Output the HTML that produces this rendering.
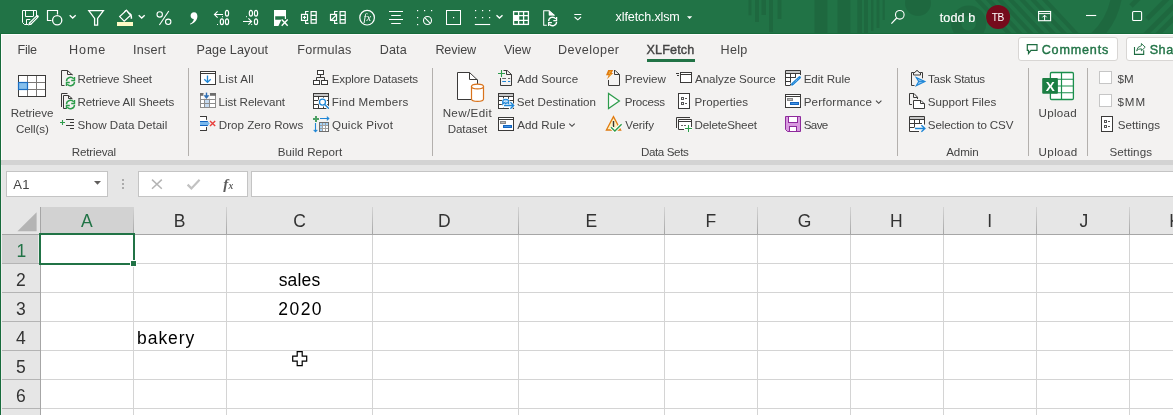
<!DOCTYPE html>
<html lang="en"><head><meta charset="utf-8"><title>xlfetch.xlsm - Excel</title>
<style>
html,body{margin:0;padding:0;}
body{width:1173px;height:415px;overflow:hidden;position:relative;background:#e6e6e6;font-family:"Liberation Sans", sans-serif;}
.b{position:absolute;}
.t{position:absolute;white-space:pre;line-height:1;}
#txt{position:absolute;left:0;top:0;width:1173px;height:415px;will-change:transform;}
svg{overflow:visible}
</style></head><body>
<div class="b" style="left:0px;top:0px;width:1173px;height:33px;background:#217346;"></div>
<!--TITLEDECO-->
<div class="b" style="left:0px;top:33px;width:1173px;height:1px;background:#176b3b;"></div>
<div class="b" style="left:0px;top:34px;width:1173px;height:1px;background:#ffffff;"></div>
<div class="b" style="left:0px;top:35px;width:1173px;height:125px;background:#f3f2f1;"></div>
<div class="b" style="left:0px;top:160px;width:1173px;height:5px;background:#d3d3d3;"></div>
<div class="b" style="left:0px;top:165px;width:1173px;height:250px;background:#e6e6e6;"></div>
<div class="b" style="left:0px;top:33px;width:1px;height:382px;background:#176b3b;"></div>
<div class="b" style="left:1px;top:34px;width:1px;height:126px;background:#fcfcfc;"></div>
<div class="b" style="left:1px;top:165px;width:1px;height:250px;background:#eeeeee;"></div>
<div class="b" style="left:647px;top:59px;width:48px;height:3px;background:#217346;"></div>
<div class="b" style="left:1018px;top:37.3px;width:99.5px;height:23.7px;background:#ffffff;border:1px solid #d8d6d4;border-radius:3px;box-sizing:border-box"></div>
<div class="b" style="left:1126px;top:37.3px;width:60px;height:23.7px;background:#ffffff;border:1px solid #d8d6d4;border-radius:3px;box-sizing:border-box"></div>
<div class="b" style="left:188.0px;top:68px;width:1px;height:88px;background:#b3b0ad;"></div>
<div class="b" style="left:432.0px;top:68px;width:1px;height:88px;background:#b3b0ad;"></div>
<div class="b" style="left:897.0px;top:68px;width:1px;height:88px;background:#b3b0ad;"></div>
<div class="b" style="left:1028.0px;top:68px;width:1px;height:88px;background:#b3b0ad;"></div>
<div class="b" style="left:1087.0px;top:68px;width:1px;height:88px;background:#b3b0ad;"></div>
<div class="b" style="left:1099px;top:71px;width:13px;height:13px;background:#ffffff;border:1px solid #c6c6c6;box-sizing:border-box"></div>
<div class="b" style="left:1099px;top:94px;width:13px;height:13px;background:#ffffff;border:1px solid #c6c6c6;box-sizing:border-box"></div>
<div class="b" style="left:6px;top:171px;width:102px;height:26px;background:#ffffff;border:1px solid #c4c4c4;box-sizing:border-box"></div>
<div class="b" style="left:138px;top:171px;width:109.5px;height:26px;background:#ffffff;border:1px solid #c4c4c4;box-sizing:border-box"></div>
<div class="b" style="left:251px;top:171px;width:930px;height:26px;background:#ffffff;border:1px solid #c4c4c4;box-sizing:border-box"></div>
<div class="b" style="left:122px;top:179px;width:2px;height:2px;background:#ababab;"></div>
<div class="b" style="left:122px;top:183px;width:2px;height:2px;background:#ababab;"></div>
<div class="b" style="left:122px;top:187px;width:2px;height:2px;background:#ababab;"></div>
<div class="b" style="left:41px;top:235px;width:1132px;height:180px;background:#ffffff;"></div>
<div class="b" style="left:41px;top:207px;width:92px;height:27px;background:#d2d2d2;"></div>
<div class="b" style="left:2px;top:235px;width:36px;height:28px;background:#d2d2d2;"></div>
<div class="b" style="left:38px;top:235px;width:1px;height:28px;background:#ececec;"></div>
<div class="b" style="left:2px;top:234px;width:1173px;height:1px;background:#a6a6a6;"></div>
<div class="b" style="left:40px;top:207px;width:1px;height:208px;background:#a6a6a6;"></div>
<div class="b" style="left:133px;top:207px;width:1px;height:27px;background:linear-gradient(#d4d4d4,#a6a6a6);"></div>
<div class="b" style="left:133px;top:235px;width:1px;height:180px;background:#d4d4d4;"></div>
<div class="b" style="left:226px;top:207px;width:1px;height:27px;background:linear-gradient(#d4d4d4,#a6a6a6);"></div>
<div class="b" style="left:226px;top:235px;width:1px;height:180px;background:#d4d4d4;"></div>
<div class="b" style="left:372px;top:207px;width:1px;height:27px;background:linear-gradient(#d4d4d4,#a6a6a6);"></div>
<div class="b" style="left:372px;top:235px;width:1px;height:180px;background:#d4d4d4;"></div>
<div class="b" style="left:518px;top:207px;width:1px;height:27px;background:linear-gradient(#d4d4d4,#a6a6a6);"></div>
<div class="b" style="left:518px;top:235px;width:1px;height:180px;background:#d4d4d4;"></div>
<div class="b" style="left:664px;top:207px;width:1px;height:27px;background:linear-gradient(#d4d4d4,#a6a6a6);"></div>
<div class="b" style="left:664px;top:235px;width:1px;height:180px;background:#d4d4d4;"></div>
<div class="b" style="left:757px;top:207px;width:1px;height:27px;background:linear-gradient(#d4d4d4,#a6a6a6);"></div>
<div class="b" style="left:757px;top:235px;width:1px;height:180px;background:#d4d4d4;"></div>
<div class="b" style="left:850px;top:207px;width:1px;height:27px;background:linear-gradient(#d4d4d4,#a6a6a6);"></div>
<div class="b" style="left:850px;top:235px;width:1px;height:180px;background:#d4d4d4;"></div>
<div class="b" style="left:943px;top:207px;width:1px;height:27px;background:linear-gradient(#d4d4d4,#a6a6a6);"></div>
<div class="b" style="left:943px;top:235px;width:1px;height:180px;background:#d4d4d4;"></div>
<div class="b" style="left:1036px;top:207px;width:1px;height:27px;background:linear-gradient(#d4d4d4,#a6a6a6);"></div>
<div class="b" style="left:1036px;top:235px;width:1px;height:180px;background:#d4d4d4;"></div>
<div class="b" style="left:1129px;top:207px;width:1px;height:27px;background:linear-gradient(#d4d4d4,#a6a6a6);"></div>
<div class="b" style="left:1129px;top:235px;width:1px;height:180px;background:#d4d4d4;"></div>
<div class="b" style="left:41px;top:263px;width:1132px;height:1px;background:#d4d4d4;"></div>
<div class="b" style="left:2px;top:263px;width:38px;height:1px;background:#b4b4b4;"></div>
<div class="b" style="left:41px;top:292px;width:1132px;height:1px;background:#d4d4d4;"></div>
<div class="b" style="left:2px;top:292px;width:38px;height:1px;background:#b4b4b4;"></div>
<div class="b" style="left:41px;top:321px;width:1132px;height:1px;background:#d4d4d4;"></div>
<div class="b" style="left:2px;top:321px;width:38px;height:1px;background:#b4b4b4;"></div>
<div class="b" style="left:41px;top:350px;width:1132px;height:1px;background:#d4d4d4;"></div>
<div class="b" style="left:2px;top:350px;width:38px;height:1px;background:#b4b4b4;"></div>
<div class="b" style="left:41px;top:379px;width:1132px;height:1px;background:#d4d4d4;"></div>
<div class="b" style="left:2px;top:379px;width:38px;height:1px;background:#b4b4b4;"></div>
<div class="b" style="left:41px;top:408px;width:1132px;height:1px;background:#d4d4d4;"></div>
<div class="b" style="left:2px;top:408px;width:38px;height:1px;background:#b4b4b4;"></div>
<div class="b" style="left:41px;top:233px;width:94px;height:2px;background:#217346;"></div>
<div class="b" style="left:39px;top:235px;width:2px;height:29px;background:#217346;"></div>
<div class="b" style="left:39px;top:233px;width:96px;height:32px;background:transparent;border:2px solid #217346;box-sizing:border-box"></div>
<div class="b" style="left:130px;top:260px;width:7px;height:7px;background:#ffffff;"></div>
<div class="b" style="left:131px;top:261px;width:5px;height:5px;background:#217346;"></div>
<svg class="b" style="left:17px;top:211.5px" width="20" height="20" viewBox="0 0 20 20"><path d="M19.6 0.2V19.3H0.4Z" fill="#b4b4b4"/></svg>
<svg class="b" style="left:0;top:0;will-change:transform" width="1173" height="415" viewBox="0 0 1173 415"><defs><clipPath id="tb"><rect x="0" y="0" width="1173" height="33"/></clipPath></defs><g clip-path="url(#tb)">
<g fill="rgba(0,0,0,0.09)" stroke="none">
<rect x="748.4" y="0" width="3.1" height="15.3"/>
<rect x="755" y="0" width="4" height="22"/>
<rect x="761.4" y="0" width="4.6" height="15"/>
<rect x="769" y="0" width="4" height="32"/>
<rect x="777.5" y="0" width="4" height="19"/>
<rect x="814.4" y="0" width="13" height="33"/>
<rect x="837.4" y="0" width="13" height="33"/>
<rect x="857.3" y="0" width="4.7" height="33"/>
<rect x="864" y="0" width="4" height="33"/>
<rect x="871" y="0" width="2.5" height="31"/>
<rect x="876.5" y="0" width="3" height="28"/>
<rect x="882.6" y="0" width="2.3" height="20"/>
<circle cx="918" cy="3" r="13"/>
</g>
<circle cx="968.7" cy="23.3" r="12.5" stroke="rgba(0,0,0,0.09)" stroke-width="10.5" fill="none"/>
<path d="M1116.5 -3 A70 70 0 0 1 1094 38" stroke="rgba(0,0,0,0.09)" stroke-width="11" fill="none"/>
<path d="M976 -2 L1010.5 35 M987 -2 L1021.5 35 M998 -2 L1032.5 35 M1009 -2 L1043.5 35 M1020.3 -2 L1054.8 35 M1031.3 -2 L1065.8 35 M1043 -2 L1077.5 35 " stroke="rgba(0,0,0,0.09)" stroke-width="4.3" fill="none"/>
<path d="M1131 6 L1140 -3 M1147 19 L1170 -4 M1144 36 L1176 4 M1156 36 L1176 16" stroke="rgba(0,0,0,0.09)" stroke-width="5" fill="none"/></g>
<path d="M36.5 16.5 V10.5 H22.5 V22.5 L24.5 24.5 H28" stroke="#ffffff" stroke-width="1" fill="none" />
<path d="M25.5 10.5 V16.5 H33.5 V10.5" stroke="#ffffff" stroke-width="1" fill="none" />
<path d="M26.5 24.5 V19.5 H30.5" stroke="#ffffff" stroke-width="1" fill="none" />
<path d="M37 16.8 L29.6 24.2" stroke="#217346" stroke-width="5.2" fill="none" />
<path d="M37.3 16.5 L30.4 23.4" stroke="#ffffff" stroke-width="3" fill="none" stroke-linecap="round"/>
<path d="M31.6 24.4 L28 25.6 L29.2 22 Z" stroke="none" stroke-width="0" fill="#ffffff" />
<path d="M36.6 17.2 L30.2 23.6" stroke="#217346" stroke-width="0.9" fill="none" />
<path d="M57.5 14.5 V10.5 H47.5 V20.5 H51.5" stroke="#ffffff" stroke-width="1.2" fill="none" />
<circle cx="57.2" cy="20.3" r="4.6" stroke="#ffffff" stroke-width="1.3" fill="none"/>
<path d="M69.7 15.2 l3.0 2.8 l3.0 -2.8" stroke="#ffffff" stroke-width="1.35" fill="none" />
<path d="M88.8 10.7 H103.4 L97.6 18.4 V25.2 H94.6 V18.4 Z" stroke="#ffffff" stroke-width="1.3" fill="none" stroke-linejoin="miter"/>
<rect x="117" y="22" width="16" height="4" stroke="none" stroke-width="0" fill="#fffbc6" />
<path d="M126.4 10.4 L119.7 16.6 L124.2 21.2 L130.9 15 Z" stroke="#ffffff" stroke-width="1.25" fill="none" />
<path d="M124.2 12.4 Q124.6 9.9 126.6 10.2 Q128.2 10.6 127.6 12.6" stroke="#ffffff" stroke-width="0.9" fill="none" />
<path d="M128.4 13.2 Q131.8 14 131.4 18.8" stroke="#ffffff" stroke-width="1.5" fill="none" />
<path d="M138.7 15.2 l3.0 2.8 l3.0 -2.8" stroke="#ffffff" stroke-width="1.35" fill="none" />
<circle cx="159.7" cy="14.4" r="2.7" stroke="#ffffff" stroke-width="1.1" fill="none"/>
<circle cx="168.2" cy="21.8" r="2.7" stroke="#ffffff" stroke-width="1.1" fill="none"/>
<path d="M168.8 11 L159.4 25" stroke="#ffffff" stroke-width="1.1" fill="none" />
<path d="M194 12.2 C196.4 12.2 197.6 14.2 197.4 16.6 C197.1 20.4 194.2 23.6 190.2 24.6 L190 23.8 C192.2 22.8 193.6 21.2 193.8 19 C191.8 19 190.6 17.6 190.6 15.7 C190.6 13.7 192 12.2 194 12.2 Z" stroke="none" stroke-width="0" fill="#ffffff" />
<path d="M223 14.5 H214.5 M217.6 11.3 L214.4 14.5 L217.6 17.7" stroke="#ffffff" stroke-width="1.1" fill="none" />
<ellipse cx="227" cy="13.3" rx="1.6" ry="2.9" stroke="#ffffff" stroke-width="1.2" fill="none"/>
<rect x="222" y="16.2" width="1" height="1" stroke="none" stroke-width="0" fill="#ffffff" />
<ellipse cx="221.9" cy="21.8" rx="1.6" ry="2.9" stroke="#ffffff" stroke-width="1.2" fill="none"/>
<ellipse cx="227" cy="21.8" rx="1.6" ry="2.9" stroke="#ffffff" stroke-width="1.2" fill="none"/>
<rect x="217" y="24" width="1" height="1" stroke="none" stroke-width="0" fill="#ffffff" />
<ellipse cx="250.9" cy="13.3" rx="1.6" ry="2.9" stroke="#ffffff" stroke-width="1.2" fill="none"/>
<ellipse cx="256" cy="13.3" rx="1.6" ry="2.9" stroke="#ffffff" stroke-width="1.2" fill="none"/>
<rect x="246" y="16.2" width="1" height="1" stroke="none" stroke-width="0" fill="#ffffff" />
<path d="M243 21.5 H251.5 M248.4 18.3 L251.6 21.5 L248.4 24.7" stroke="#ffffff" stroke-width="1.1" fill="none" />
<ellipse cx="256" cy="21.8" rx="1.6" ry="2.9" stroke="#ffffff" stroke-width="1.2" fill="none"/>
<rect x="251.2" y="24" width="1" height="1" stroke="none" stroke-width="0" fill="#ffffff" />
<path d="M274 10 H286 V19 H284.8 V16.3 H275.2 V19.7 H281.4 L278.4 26 H274 Z" stroke="none" stroke-width="0" fill="#ffffff" />
<path d="M281.7 19.4 L287.7 25.7 M287.7 19.4 L281.7 25.7" stroke="#ffffff" stroke-width="1.4" fill="none" />
<rect x="311.1" y="11.6" width="5.1" height="11.6" stroke="#ffffff" stroke-width="1.2" fill="none" />
<path d="M311.1 15.4 h5.1 M311.1 19.6 h5.1" stroke="#ffffff" stroke-width="1.2" fill="none" />
<path d="M308.6 11.5 H305.6 V14 M305.6 21 V23.4 H308.6" stroke="#ffffff" stroke-width="1.1" fill="none" />
<rect x="301.5" y="14.4" width="6" height="6" stroke="#ffffff" stroke-width="1.2" fill="#217346" />
<rect x="340.1" y="11.6" width="5.1" height="11.6" stroke="#ffffff" stroke-width="1.2" fill="none" />
<path d="M340.1 15.4 h5.1 M340.1 19.6 h5.1" stroke="#ffffff" stroke-width="1.2" fill="none" />
<path d="M337.6 11.5 H334.6 V14 M334.6 21 V23.4 H337.6" stroke="#ffffff" stroke-width="1.1" fill="none" />
<rect x="330.5" y="14.4" width="6" height="6" stroke="#ffffff" stroke-width="1.2" fill="#217346" />
<path d="M302.9 17.4 h3.2 M304.5 15.8 v3.2" stroke="#ffffff" stroke-width="1.1" fill="none" />
<path d="M331.2 20.2 L336.8 14.6" stroke="#ffffff" stroke-width="1.3" fill="none" />
<path d="M331 20.4 V16.2 L335.2 20.4 Z" stroke="none" stroke-width="0" fill="rgba(255,255,255,0.0)" />
<circle cx="367.1" cy="17.7" r="7.3" stroke="#ffffff" stroke-width="1.2" fill="none"/>
<text x="367.3" y="21" font-family="Liberation Serif, serif" font-style="italic" font-size="10.5" fill="#fff" text-anchor="middle">fx</text>
<path d="M389 11.5 H403 M391.2 15.5 H400.8 M389 19.5 H403 M391.2 23.5 H400.8" stroke="#ffffff" stroke-width="1" fill="none" />
<rect x="417" y="10" width="1.2" height="1.2" stroke="none" stroke-width="0" fill="#ffffff" />
<rect x="424" y="10" width="1.2" height="1.2" stroke="none" stroke-width="0" fill="#ffffff" />
<rect x="431" y="10" width="1.2" height="1.2" stroke="none" stroke-width="0" fill="#ffffff" />
<rect x="417" y="17" width="1.2" height="1.2" stroke="none" stroke-width="0" fill="#ffffff" />
<rect x="417" y="24" width="1.2" height="1.2" stroke="none" stroke-width="0" fill="#ffffff" />
<circle cx="427.5" cy="20.5" r="4" stroke="#ffffff" stroke-width="1.1" fill="none"/>
<path d="M424.7 17.7 L430.3 23.3" stroke="#ffffff" stroke-width="1.1" fill="none" />
<rect x="446.5" y="10.5" width="14" height="14" stroke="#ffffff" stroke-width="1" fill="none" />
<rect x="453" y="17" width="1.2" height="1.2" stroke="none" stroke-width="0" fill="#ffffff" />
<rect x="475" y="10" width="1.2" height="1.2" stroke="none" stroke-width="0" fill="#ffffff" />
<rect x="482" y="10" width="1.2" height="1.2" stroke="none" stroke-width="0" fill="#ffffff" />
<rect x="489" y="10" width="1.2" height="1.2" stroke="none" stroke-width="0" fill="#ffffff" />
<rect x="475" y="17" width="1.2" height="1.2" stroke="none" stroke-width="0" fill="#ffffff" />
<rect x="482" y="17" width="1.2" height="1.2" stroke="none" stroke-width="0" fill="#ffffff" />
<rect x="489" y="17" width="1.2" height="1.2" stroke="none" stroke-width="0" fill="#ffffff" />
<path d="M474.8 24.5 H490.2" stroke="#ffffff" stroke-width="1.1" fill="none" />
<path d="M496.5 15.2 l3.0 2.8 l3.0 -2.8" stroke="#ffffff" stroke-width="1.35" fill="none" />
<rect x="513.6" y="11.6" width="14.8" height="12.8" stroke="#ffffff" stroke-width="1.3" fill="none" />
<path d="M518.6 11.6 V24.4 M523.6 11.6 V24.4 M513.6 15.6 H528.4 M513.6 20.3 H528.4" stroke="#ffffff" stroke-width="1.3" fill="none" />
<rect x="513.6" y="15.6" width="5" height="4.7" stroke="none" stroke-width="0" fill="#ffffff" />
<path d="M546.8 25.2 H543.7 V10.7 H549 L554.4 15.3" stroke="#ffffff" stroke-width="1.05" fill="none" />
<path d="M549 10.7 V15.3 H554.4 Z" stroke="#ffffff" stroke-width="0.6" fill="#ffffff" />
<path d="M548.6 21.1 A4 4 0 0 1 555.8000000000001 18.9" stroke="#ffffff" stroke-width="1.25" fill="none" /><path d="M556.6 17.1 V20.5 H553.3000000000001" stroke="#ffffff" stroke-width="1.25" fill="none" /><path d="M556.6 21.9 A4 4 0 0 1 549.4 24.1" stroke="#ffffff" stroke-width="1.25" fill="none" /><path d="M548.6 25.9 V22.5 H551.9" stroke="#ffffff" stroke-width="1.25" fill="none" />
<path d="M574.3 14.5 H581.3" stroke="#ffffff" stroke-width="1" fill="none" />
<path d="M574.6 17 L577.8 19.8 L581 17" stroke="#ffffff" stroke-width="1.1" fill="none" />
<path d="M687 16.3 H692.2 L689.6 19 Z" stroke="none" stroke-width="0" fill="#ffffff" />
<circle cx="899.8" cy="14.8" r="4.3" stroke="#ffffff" stroke-width="1.1" fill="none"/>
<path d="M896.7 18 L891.4 23.6" stroke="#ffffff" stroke-width="1.2" fill="none" />
<circle cx="998.1" cy="17" r="12" stroke="none" stroke-width="0" fill="#750b1c"/>
<rect x="1038.6" y="11.5" width="12" height="9.2" stroke="#ffffff" stroke-width="1.1" fill="none" />
<path d="M1038.6 13.6 H1050.6 M1044.6 20.7 V15.4 M1042.5 17.3 L1044.6 15.2 L1046.7 17.3" stroke="#ffffff" stroke-width="1" fill="none" />
<path d="M1086 15.5 H1096.2" stroke="#ffffff" stroke-width="1.1" fill="none" />
<rect x="1132.6" y="11.5" width="9" height="9" stroke="#ffffff" stroke-width="1.1" fill="none" rx="1"/>
<path d="M1027.3 44.6 H1037 V50.4 H1031 L1028.5 53.5 V50.4 H1027.3 Z" stroke="#1e6c41" stroke-width="1.2" fill="none" />
<path d="M1134.5 47 V54.4 H1143.7 V50.2" stroke="#1e6c41" stroke-width="1.1" fill="none" />
<path d="M1136.6 50.8 Q1137 46.6 1141.4 45.7 V43.5 L1145.2 47.2 L1141.4 50.8 V48.8 Q1138.4 48.6 1136.6 50.8 Z" stroke="#1e6c41" stroke-width="0.9" fill="none" />
<rect x="18.5" y="75.5" width="27" height="21" stroke="#3b3a39" stroke-width="1" fill="#ffffff" />
<path d="M27.5 76 V96 M36.5 76 V96 M19 82.5 H45 M19 89.5 H45" stroke="#7a7876" stroke-width="1" fill="none" />
<rect x="18.5" y="82.5" width="9" height="7" stroke="#1b6ec2" stroke-width="1.2" fill="#85bfec" />
<path d="M64.5 85.5 H61.5 V70.5 H67.5 L72.5 75 M67.5 70.5 V74.5 H72.5" stroke="#3b3a39" stroke-width="1" fill="none" />
<path d="M66.5 81.1 A4 4 0 0 1 73.7 78.9" stroke="#2d9c4b" stroke-width="1.4" fill="none" /><path d="M74.5 77.1 V80.5 H71.2" stroke="#2d9c4b" stroke-width="1.4" fill="none" /><path d="M74.5 81.9 A4 4 0 0 1 67.3 84.1" stroke="#2d9c4b" stroke-width="1.4" fill="none" /><path d="M66.5 85.9 V82.5 H69.8" stroke="#2d9c4b" stroke-width="1.4" fill="none" />
<path d="M61.5 107 V93.5 H67.5" stroke="#3b3a39" stroke-width="1" fill="none" />
<path d="M66 108.5 H63.5 V95.5 H68.5 L72.5 98.8 M68.5 95.5 V98.5 H72" stroke="#3b3a39" stroke-width="1" fill="none" />
<path d="M66.5 104.1 A4 4 0 0 1 73.7 101.9" stroke="#2d9c4b" stroke-width="1.4" fill="none" /><path d="M74.5 100.1 V103.5 H71.2" stroke="#2d9c4b" stroke-width="1.4" fill="none" /><path d="M74.5 104.9 A4 4 0 0 1 67.3 107.1" stroke="#2d9c4b" stroke-width="1.4" fill="none" /><path d="M66.5 108.9 V105.5 H69.8" stroke="#2d9c4b" stroke-width="1.4" fill="none" />
<path d="M60 122.5 H65 M62.5 120 V125" stroke="#2d9c4b" stroke-width="1.1" fill="none" />
<path d="M66 119.5 H74 M70 122.5 H74 M66 125.5 H74 M70 128.5 H74" stroke="#3b3a39" stroke-width="1" fill="none" />
<rect x="200.5" y="71.5" width="15" height="13" stroke="#3b3a39" stroke-width="1" fill="#ffffff" />
<path d="M200.5 73.5 H215.5" stroke="#3b3a39" stroke-width="1" fill="none" />
<path d="M207.5 75.4 V82.2 M204.3 79.2 L207.5 82.4 L210.7 79.2" stroke="#1e86d6" stroke-width="1.3" fill="none" />
<rect x="200.5" y="93.5" width="15" height="14" stroke="#8c8c8c" stroke-width="1" fill="#ffffff" />
<rect x="205" y="100" width="4" height="3" stroke="none" stroke-width="0" fill="#c5daf0" />
<rect x="205" y="104" width="4" height="3" stroke="none" stroke-width="0" fill="#c5daf0" />
<path d="M200.5 99.5 H215.5 M200.5 103.5 H215.5 M204.5 96 V107.5 M209.5 98 V107.5" stroke="#8c8c8c" stroke-width="1" fill="none" />
<rect x="200" y="93" width="3.6" height="2.8" stroke="none" stroke-width="0" fill="#6e6e6e" />
<rect x="210" y="93" width="6" height="2.8" stroke="none" stroke-width="0" fill="#6e6e6e" />
<rect x="203.6" y="92.5" width="6.3" height="6.4" stroke="none" stroke-width="0" fill="#f3f2f1" />
<path d="M206.5 92.6 V96" stroke="#2f6fb5" stroke-width="1.4" fill="none" />
<path d="M203.6 95.2 H209.4 L206.5 99 Z" stroke="none" stroke-width="0" fill="#2f6fb5" />
<path d="M200 116.5 H206.5 V119.6 M200 130.5 H206.5 V127.2" stroke="#3b3a39" stroke-width="1" fill="#ffffff" />
<rect x="200" y="117" width="6" height="13" stroke="none" stroke-width="0" fill="#ffffff" />
<path d="M200 116.5 H206.5 V119.6 M200 130.5 H206.5 V127.2" stroke="#3b3a39" stroke-width="1" fill="none" />
<path d="M200 121 H207.6 L209.8 123.5 L207.6 126 H200 Z" stroke="none" stroke-width="0" fill="#7ab8ec" />
<path d="M200 121.5 H207.8 M200 125.5 H207.8" stroke="#1565c0" stroke-width="1" fill="none" />
<path d="M210 120.9 L215.2 126.1 M215.2 120.9 L210 126.1" stroke="#e8403c" stroke-width="1.4" fill="none" />
<rect x="317.5" y="70.5" width="6" height="4" stroke="#3b3a39" stroke-width="1" fill="#ffffff" />
<rect x="313.5" y="80.5" width="6" height="4" stroke="#3b3a39" stroke-width="1" fill="#ffffff" />
<rect x="321.5" y="80.5" width="6" height="4" stroke="#3b3a39" stroke-width="1" fill="#ffffff" />
<path d="M320.5 74.5 V77.5 M316.5 80.5 V77.5 H324.5 V80.5" stroke="#3b3a39" stroke-width="1" fill="none" />
<rect x="313.5" y="93.5" width="15" height="15" stroke="#3b3a39" stroke-width="1" fill="#ffffff" /><rect x="314.0" y="94.0" width="14" height="2.5" stroke="none" stroke-width="0" fill="#c8c8c8" /><path d="M313.5 96.5 H328.5" stroke="#3b3a39" stroke-width="1" fill="none" />
<path d="M313.5 100.5 H328.5 M313.5 104.5 H328.5 M318.5 96.5 V108.5 M323.5 96.5 V108.5" stroke="#3b3a39" stroke-width="1" fill="none" />
<path d="M325 104.6 L328.6 108.4" stroke="#ffffff" stroke-width="3.4" fill="none" />
<circle cx="322.5" cy="102.1" r="3.1" stroke="#ffffff" stroke-width="3" fill="#ffffff"/>
<circle cx="322.5" cy="102.1" r="3.0" stroke="#1e86d6" stroke-width="1.3" fill="#ffffff"/>
<path d="M324.7 104.4 L328.7 108.5" stroke="#1e86d6" stroke-width="1.5" fill="none" />
<path d="M313 119 H319 M316 116 V122" stroke="#4ca064" stroke-width="2" fill="none" />
<path d="M320 118.5 H328.6 M326.8 116.7 L328.8 118.5 L326.8 120.3" stroke="#1e86d6" stroke-width="1.1" fill="none" />
<path d="M315.5 123 V131.6 M313.7 129.8 L315.5 131.8 L317.3 129.8" stroke="#1e86d6" stroke-width="1.1" fill="none" />
<rect x="319.5" y="122.5" width="9" height="9" stroke="#6e6e6e" stroke-width="1" fill="#ffffff" />
<rect x="320" y="123" width="8" height="2.5" stroke="none" stroke-width="0" fill="#a8d4f8" />
<rect x="320" y="123" width="2.5" height="8" stroke="none" stroke-width="0" fill="#a8d4f8" />
<path d="M322.5 123 V131 M325.5 123 V131 M320 125.5 H328 M320 128.5 H328" stroke="#a0a0a0" stroke-width="1" fill="none" />
<path d="M457.5 72.5 H469.5 L477.5 80 V99.5 H457.5 Z" stroke="#3b3a39" stroke-width="1" fill="#ffffff" />
<path d="M469.5 72.5 V79.5 H477.5" stroke="#3b3a39" stroke-width="1" fill="none" />
<path d="M471.5 86.5 V99 A6 2.4 0 0 0 483.5 99 V86.5 Z" stroke="#d9731c" stroke-width="1.2" fill="#ffffff" />
<ellipse cx="477.5" cy="86.5" rx="6" ry="2.4" stroke="#d9731c" stroke-width="1.2" fill="#ffffff"/>
<path d="M500.5 78 V85.5 H511.5 V74.5 L507.2 70.5 H503.5 M506.5 70.5 V74.5 H511.5" stroke="#3b3a39" stroke-width="1" fill="none" />
<path d="M498 73.5 H505 M501.5 70 V77" stroke="#2d9c4b" stroke-width="1.1" fill="none" />
<path d="M502.2 78.5 H506 M508 78.5 H510.2" stroke="#666" stroke-width="1" fill="none" />
<path d="M502.2 81.5 H506 M508 81.5 H510.2" stroke="#1e86d6" stroke-width="1.2" fill="none" />
<rect x="498.5" y="93.5" width="15" height="15" stroke="#3b3a39" stroke-width="1" fill="#ffffff" /><rect x="499.0" y="94.0" width="14" height="2.5" stroke="none" stroke-width="0" fill="#c8c8c8" /><path d="M498.5 96.5 H513.5" stroke="#3b3a39" stroke-width="1" fill="none" />
<path d="M498.5 100.5 H513.5 M498.5 104.5 H513.5 M503.5 96.5 V108.5 M508.5 96.5 V100.5" stroke="#3b3a39" stroke-width="1" fill="none" />
<path d="M502.6 104.6 V101.4 Q502.6 98.9 505.7 98.9 Q508.9 98.9 508.9 101.6 V103.4 L510.6 102 L514.6 105.5 L510.6 109.4 L509 107 H503.6 Z" stroke="#ffffff" stroke-width="1.6" fill="#ffffff" />
<path d="M502.7 104.3 V101.5 Q502.7 99.3 505.7 99.3 Q508.7 99.3 508.7 101.6 V103.6 L507.2 102.6 L505.7 103.8 L504.2 102.6 Z" stroke="#1e86d6" stroke-width="1.1" fill="#9fcdf3" />
<path d="M504.6 101.2 V102 M506.8 101.2 V102" stroke="#ffffff" stroke-width="0.9" fill="none" />
<path d="M504 105.5 H513.6 M510.4 102.3 L513.7 105.5 L510.4 108.7" stroke="#1e86d6" stroke-width="1.4" fill="none" />
<rect x="498.5" y="117.5" width="15" height="13" stroke="#3b3a39" stroke-width="1" fill="#ffffff" /><path d="M498.5 119.5 H513.5" stroke="#3b3a39" stroke-width="1" fill="none" /><rect x="500.0" y="121.0" width="6" height="3" stroke="none" stroke-width="0" fill="#8a8a8a" /><rect x="501.2" y="122.1" width="3.6" height="0.9" stroke="none" stroke-width="0" fill="#c4c4c4" /><rect x="503.0" y="125.0" width="9" height="3" stroke="none" stroke-width="0" fill="#1565c0" /><rect x="504.2" y="126.1" width="6.6" height="0.9" stroke="none" stroke-width="0" fill="#4a9be8" />
<path d="M569.3 123.6 l2.7 2.7 l2.7 -2.7" stroke="#444" stroke-width="1.1" fill="none" />
<path d="M608.5 80 V85.5 H619.5 V74.5 L615.2 70.5 M614.5 70 V74.5 H619.5" stroke="#3b3a39" stroke-width="1" fill="none" />
<path d="M608.2 70 H613.2 L611.6 73 H613.2 L607 79.2 L608.7 75.2 H606 Z" stroke="none" stroke-width="0" fill="#e07b10" />
<path d="M610.4 71 L609 74 M610.8 74.2 L609.4 76.6" stroke="#f7c64a" stroke-width="0.8" fill="none" />
<path d="M608.5 93.4 V108.6 L619.4 101 Z" stroke="#2d9c4b" stroke-width="1.2" fill="#fbfbfb" />
<path d="M613.5 116.6 L606.4 130 H620.6 Z" stroke="#e07b10" stroke-width="1.3" fill="#fdf0c0" />
<path d="M613.5 121 V127" stroke="#333" stroke-width="1.4" fill="none" />
<path d="M611 127.3 L614.9 131 L621.6 124.3" stroke="#ffffff" stroke-width="3.4" fill="none" />
<path d="M611 127.3 L614.9 131 L621.6 124.3" stroke="#2d9c4b" stroke-width="1.4" fill="none" />
<rect x="680.5" y="72.5" width="11" height="10" stroke="#3b3a39" stroke-width="1" fill="#ffffff" />
<path d="M680.5 74.5 H691.5" stroke="#3b3a39" stroke-width="1" fill="none" />
<path d="M676 73.5 H679 M677 75.5 H679" stroke="#3b3a39" stroke-width="1" fill="none" />
<rect x="678.5" y="93.5" width="11" height="15" stroke="#3b3a39" stroke-width="1" fill="#ffffff" /><rect x="681.5" y="97.5" width="2" height="2" stroke="#555" stroke-width="1" fill="#ffffff" /><rect x="681.5" y="102.5" width="2" height="2" stroke="#555" stroke-width="1" fill="#ffffff" /><path d="M685.0 98.5 h2 M685.0 103.5 h2" stroke="#555" stroke-width="1" fill="none" />
<path d="M676.5 128 V117.5 H690" stroke="#3b3a39" stroke-width="1" fill="none" />
<path d="M684 129.5 H678.5 V119.5 H691.5 V127" stroke="#3b3a39" stroke-width="1" fill="#ffffff" />
<path d="M678.5 121.5 H691.5" stroke="#3b3a39" stroke-width="1" fill="none" />
<path d="M681 125.5 H683 M684 125.5 H686" stroke="#666" stroke-width="1" fill="none" />
<path d="M685 128.5 H692 M688.5 125 V132" stroke="#ffffff" stroke-width="3" fill="none" />
<path d="M685 128.5 H692 M688.5 125 V132" stroke="#2d9c4b" stroke-width="1.1" fill="none" />
<path d="M790 85.5 H785.5 V70.5 H800.5 V75" stroke="#3b3a39" stroke-width="1" fill="#ffffff" />
<rect x="786" y="71" width="14" height="2.5" stroke="none" stroke-width="0" fill="#c8c8c8" />
<path d="M785.5 73.5 H800.5 M785.5 77.5 H795.5 M785.5 81.5 H790.5 M790.5 73.5 V85.5 M795.5 73.5 V78" stroke="#3b3a39" stroke-width="1" fill="none" />
<path d="M799.8 77.2 L791.6 85" stroke="#ffffff" stroke-width="4.6" fill="none" />
<path d="M799.6 77.4 L792.6 84" stroke="#1e86d6" stroke-width="2.7" fill="none" stroke-linecap="round"/>
<path d="M793.4 85 L790.9 85.6 L791.6 83.2 Z" stroke="none" stroke-width="0" fill="#1e86d6" />
<path d="M798.4 78.6 L793.6 83.1" stroke="#d8ecfb" stroke-width="0.8" fill="none" stroke-dasharray="1 1"/>
<rect x="785.5" y="94.5" width="15" height="13" stroke="#3b3a39" stroke-width="1" fill="#ffffff" /><path d="M785.5 96.5 H800.5" stroke="#3b3a39" stroke-width="1" fill="none" /><rect x="787.0" y="98.0" width="6" height="3" stroke="none" stroke-width="0" fill="#8a8a8a" /><rect x="788.2" y="99.1" width="3.6" height="0.9" stroke="none" stroke-width="0" fill="#c4c4c4" /><rect x="790.0" y="102.0" width="9" height="3" stroke="none" stroke-width="0" fill="#1565c0" /><rect x="791.2" y="103.1" width="6.6" height="0.9" stroke="none" stroke-width="0" fill="#4a9be8" />
<path d="M876 100.6 l2.7 2.7 l2.7 -2.7" stroke="#444" stroke-width="1.1" fill="none" />
<path d="M785.5 116.5 H800.5 V131.5 H787.5 L785.5 129.5 Z" stroke="#8e2a9c" stroke-width="1" fill="#d89adf" />
<rect x="788.5" y="116.5" width="9" height="6" stroke="#8e2a9c" stroke-width="1" fill="#ffffff" />
<rect x="789.5" y="126.5" width="7" height="5" stroke="#8e2a9c" stroke-width="1" fill="#ffffff" />
<path d="M914.5 85.5 H911.5 V72.5 H913.5 M920.5 72.5 H922.5 V78.3" stroke="#3b3a39" stroke-width="1" fill="none" />
<path d="M913.5 72.5 V75 H920.5 V72.5 H919 Q917 68.5 915 72.5 Z" stroke="#3b3a39" stroke-width="1" fill="none" />
<path d="M916.2 77.4 L925 81.4 L916.2 85.8 L918.7 81.4 Z" stroke="#1e86d6" stroke-width="1.1" fill="#8cc4f0" />
<path d="M918.7 81.4 H924" stroke="#1e86d6" stroke-width="1" fill="none" />
<path d="M912 104.5 H909.5 V93.5 H914 L917.5 97.2 V99 M913.5 93.5 V97.5 H917.5" stroke="#3b3a39" stroke-width="1" fill="none" />
<path d="M913.5 100.5 H921 L924.5 104 V108.5 H913.5 Z" stroke="#3b3a39" stroke-width="1" fill="#ffffff" />
<path d="M920.5 100.5 V103.5 H924.5" stroke="#3b3a39" stroke-width="1" fill="none" />
<path d="M919 131.5 H909.5 V116.5 H924.5 V124.6" stroke="#3b3a39" stroke-width="1" fill="#ffffff" />
<rect x="910" y="117" width="14" height="2.5" stroke="none" stroke-width="0" fill="#c8c8c8" />
<path d="M909.5 119.5 H924.5 M909.5 123.5 H922 M909.5 127.5 H914 M914.5 119.5 V127.5 M919.5 119.5 V124" stroke="#3b3a39" stroke-width="1" fill="none" />
<path d="M915 128.5 H924.8" stroke="#ffffff" stroke-width="3.2" fill="none" />
<path d="M915 128.5 H924.8 M921.4 125.2 L924.9 128.5 L921.4 131.8" stroke="#1e86d6" stroke-width="1.4" fill="none" />
<rect x="1050.4" y="72.5" width="23" height="27" stroke="#1b8f4d" stroke-width="1.3" fill="#ffffff" rx="1.2"/>
<path d="M1061.5 72.5 V99.5 M1050.4 79.25 H1073.4 M1050.4 86 H1073.4 M1050.4 92.75 H1073.4" stroke="#1b8f4d" stroke-width="1.2" fill="none" />
<rect x="1042.2" y="78" width="15.7" height="15.8" stroke="none" stroke-width="0" fill="#1b7e43" rx="1"/>
<text x="1050.2" y="91" font-family="Liberation Sans, sans-serif" font-weight="700" font-size="13.5" fill="#fff" text-anchor="middle">X</text>
<rect x="1101.5" y="116.5" width="11" height="15" stroke="#3b3a39" stroke-width="1" fill="#ffffff" /><rect x="1104.5" y="120.5" width="2" height="2" stroke="#555" stroke-width="1" fill="#ffffff" /><rect x="1104.5" y="125.5" width="2" height="2" stroke="#555" stroke-width="1" fill="#ffffff" /><path d="M1108.0 121.5 h2 M1108.0 126.5 h2" stroke="#555" stroke-width="1" fill="none" />
<path d="M94 181 H101 L97.5 184.8 Z" stroke="none" stroke-width="0" fill="#605e5c" />
<path d="M152 179.6 L161.8 188.8 M161.8 179.6 L152 188.8" stroke="#b4b4b4" stroke-width="1.5" fill="none" />
<path d="M187.6 184.6 L191.4 188.4 L199.6 179.8" stroke="#c2c2c2" stroke-width="2.2" fill="none" />
<text x="223.2" y="188.6" font-family="Liberation Serif, serif" font-style="italic" font-weight="700" font-size="15" fill="#5c5c5c">f</text>
<text x="228.4" y="188.8" font-family="Liberation Serif, serif" font-style="italic" font-weight="700" font-size="9.5" fill="#5c5c5c">x</text>
<path d="M297.2 351.6 H302.2 V356.1 H306.7 V361.1 H302.2 V365.6 H297.2 V361.1 H292.7 V356.1 H297.2 Z" stroke="#000" stroke-width="1.2" fill="#ffffff" /></svg>
<div id="txt">
<span class="t" style="left:615.58px;top:11.00px;font-size:12.6px;color:#ffffff;font-weight:400;letter-spacing:-0.136px;">xlfetch.xlsm</span>
<span class="t" style="left:939.70px;top:12.00px;font-size:12.6px;color:#ffffff;font-weight:400;letter-spacing:0.116px;-webkit-text-stroke:0.2px #fff;">todd b</span>
<span class="t" style="left:991.84px;top:13.00px;font-size:10.2px;color:#ffffff;font-weight:400;letter-spacing:-0.531px;">TB</span>
<span class="t" style="left:17.49px;top:44.00px;font-size:12.6px;color:#444444;font-weight:400;letter-spacing:-0.296px;">File</span>
<span class="t" style="left:69.09px;top:44.00px;font-size:12.6px;color:#444444;font-weight:400;letter-spacing:0.899px;">Home</span>
<span class="t" style="left:133.06px;top:44.00px;font-size:12.6px;color:#444444;font-weight:400;letter-spacing:0.247px;">Insert</span>
<span class="t" style="left:196.49px;top:44.00px;font-size:12.6px;color:#444444;font-weight:400;letter-spacing:0.090px;">Page Layout</span>
<span class="t" style="left:297.29px;top:44.00px;font-size:12.6px;color:#444444;font-weight:400;letter-spacing:0.203px;">Formulas</span>
<span class="t" style="left:379.69px;top:44.00px;font-size:12.6px;color:#444444;font-weight:400;letter-spacing:0.169px;">Data</span>
<span class="t" style="left:435.39px;top:44.00px;font-size:12.6px;color:#444444;font-weight:400;letter-spacing:-0.109px;">Review</span>
<span class="t" style="left:503.95px;top:44.00px;font-size:12.6px;color:#444444;font-weight:400;letter-spacing:-0.044px;">View</span>
<span class="t" style="left:558.09px;top:44.00px;font-size:12.6px;color:#444444;font-weight:400;letter-spacing:0.447px;">Developer</span>
<span class="t" style="left:646.55px;top:44.00px;font-size:12.6px;color:#444444;font-weight:400;letter-spacing:0.139px;-webkit-text-stroke:0.4px #444444;">XLFetch</span>
<span class="t" style="left:720.59px;top:44.00px;font-size:12.6px;color:#444444;font-weight:400;letter-spacing:0.235px;">Help</span>
<span class="t" style="left:1041.72px;top:44.00px;font-size:12.6px;color:#217346;font-weight:400;letter-spacing:0.803px;-webkit-text-stroke:0.4px #217346;">Comments</span>
<span class="t" style="left:1149.67px;top:44.00px;font-size:12.6px;color:#217346;font-weight:400;letter-spacing:0.564px;-webkit-text-stroke:0.4px #217346;">Sha</span>
<span class="t" style="left:10.73px;top:107.00px;font-size:11.6px;color:#444444;font-weight:400;letter-spacing:-0.074px;">Retrieve</span>
<span class="t" style="left:15.94px;top:123.00px;font-size:11.6px;color:#444444;font-weight:400;letter-spacing:-0.107px;">Cell(s)</span>
<span class="t" style="left:77.43px;top:73.00px;font-size:11.6px;color:#444444;font-weight:400;letter-spacing:-0.157px;">Retrieve Sheet</span>
<span class="t" style="left:77.43px;top:96.00px;font-size:11.6px;color:#444444;font-weight:400;letter-spacing:-0.062px;">Retrieve All Sheets</span>
<span class="t" style="left:77.53px;top:119.00px;font-size:11.6px;color:#444444;font-weight:400;letter-spacing:0.013px;">Show Data Detail</span>
<span class="t" style="left:71.73px;top:146.00px;font-size:11.6px;color:#444444;font-weight:400;letter-spacing:-0.164px;">Retrieval</span>
<span class="t" style="left:218.53px;top:73.00px;font-size:11.6px;color:#444444;font-weight:400;letter-spacing:0.229px;">List All</span>
<span class="t" style="left:218.53px;top:96.00px;font-size:11.6px;color:#444444;font-weight:400;letter-spacing:-0.042px;">List Relevant</span>
<span class="t" style="left:218.83px;top:119.00px;font-size:11.6px;color:#444444;font-weight:400;letter-spacing:-0.004px;">Drop Zero Rows</span>
<span class="t" style="left:331.63px;top:73.00px;font-size:11.6px;color:#444444;font-weight:400;letter-spacing:-0.116px;">Explore Datasets</span>
<span class="t" style="left:331.63px;top:96.00px;font-size:11.6px;color:#444444;font-weight:400;letter-spacing:0.243px;">Find Members</span>
<span class="t" style="left:331.89px;top:119.00px;font-size:11.6px;color:#444444;font-weight:400;letter-spacing:0.239px;">Quick Pivot</span>
<span class="t" style="left:277.83px;top:146.00px;font-size:11.6px;color:#444444;font-weight:400;letter-spacing:0.050px;">Build Report</span>
<span class="t" style="left:442.63px;top:107.00px;font-size:11.6px;color:#444444;font-weight:400;letter-spacing:0.373px;">New/Edit</span>
<span class="t" style="left:447.63px;top:123.00px;font-size:11.6px;color:#444444;font-weight:400;letter-spacing:-0.068px;">Dataset</span>
<span class="t" style="left:517.18px;top:73.00px;font-size:11.6px;color:#444444;font-weight:400;letter-spacing:0.039px;">Add Source</span>
<span class="t" style="left:516.73px;top:96.00px;font-size:11.6px;color:#444444;font-weight:400;letter-spacing:0.045px;">Set Destination</span>
<span class="t" style="left:517.18px;top:119.00px;font-size:11.6px;color:#444444;font-weight:400;letter-spacing:0.078px;">Add Rule</span>
<span class="t" style="left:624.83px;top:73.00px;font-size:11.6px;color:#444444;font-weight:400;letter-spacing:-0.034px;">Preview</span>
<span class="t" style="left:624.83px;top:96.00px;font-size:11.6px;color:#444444;font-weight:400;letter-spacing:-0.290px;">Process</span>
<span class="t" style="left:625.35px;top:119.00px;font-size:11.6px;color:#444444;font-weight:400;letter-spacing:-0.058px;">Verify</span>
<span class="t" style="left:640.93px;top:146.00px;font-size:11.6px;color:#444444;font-weight:400;letter-spacing:-0.380px;">Data Sets</span>
<span class="t" style="left:694.98px;top:73.00px;font-size:11.6px;color:#444444;font-weight:400;letter-spacing:-0.044px;">Analyze Source</span>
<span class="t" style="left:694.43px;top:96.00px;font-size:11.6px;color:#444444;font-weight:400;letter-spacing:0.096px;">Properties</span>
<span class="t" style="left:694.43px;top:119.00px;font-size:11.6px;color:#444444;font-weight:400;letter-spacing:-0.125px;">DeleteSheet</span>
<span class="t" style="left:803.63px;top:73.00px;font-size:11.6px;color:#444444;font-weight:400;letter-spacing:-0.012px;">Edit Rule</span>
<span class="t" style="left:803.63px;top:96.00px;font-size:11.6px;color:#444444;font-weight:400;letter-spacing:0.206px;">Performance</span>
<span class="t" style="left:803.73px;top:119.00px;font-size:11.6px;color:#444444;font-weight:400;letter-spacing:-0.615px;">Save</span>
<span class="t" style="left:928.11px;top:73.00px;font-size:11.6px;color:#444444;font-weight:400;letter-spacing:-0.290px;">Task Status</span>
<span class="t" style="left:927.83px;top:96.00px;font-size:11.6px;color:#444444;font-weight:400;letter-spacing:0.004px;">Support Files</span>
<span class="t" style="left:927.83px;top:119.00px;font-size:11.6px;color:#444444;font-weight:400;letter-spacing:-0.138px;">Selection to CSV</span>
<span class="t" style="left:946.18px;top:146.00px;font-size:11.6px;color:#444444;font-weight:400;letter-spacing:-0.073px;">Admin</span>
<span class="t" style="left:1038.57px;top:107.00px;font-size:11.6px;color:#444444;font-weight:400;letter-spacing:0.298px;">Upload</span>
<span class="t" style="left:1038.57px;top:146.00px;font-size:11.6px;color:#444444;font-weight:400;letter-spacing:0.378px;">Upload</span>
<span class="t" style="left:1117.52px;top:73.00px;font-size:11.6px;color:#444444;font-weight:400;letter-spacing:0.155px;">$M</span>
<span class="t" style="left:1117.52px;top:96.00px;font-size:11.6px;color:#444444;font-weight:400;letter-spacing:0.911px;">$MM</span>
<span class="t" style="left:1117.63px;top:119.00px;font-size:11.6px;color:#444444;font-weight:400;letter-spacing:0.080px;">Settings</span>
<span class="t" style="left:1109.53px;top:146.00px;font-size:11.6px;color:#444444;font-weight:400;letter-spacing:0.080px;">Settings</span>
<span class="t" style="left:13.27px;top:178.00px;font-size:13px;color:#444444;font-weight:400;letter-spacing:0.282px;">A1</span>
<span class="t" style="left:81.11px;top:213.00px;font-size:17.5px;color:#217346;font-weight:400;letter-spacing:0.000px;">A</span>
<span class="t" style="left:173.73px;top:213.00px;font-size:17.5px;color:#333333;font-weight:400;letter-spacing:0.000px;">B</span>
<span class="t" style="left:293.15px;top:213.00px;font-size:17.5px;color:#333333;font-weight:400;letter-spacing:0.000px;">C</span>
<span class="t" style="left:438.03px;top:213.00px;font-size:17.5px;color:#333333;font-weight:400;letter-spacing:0.000px;">D</span>
<span class="t" style="left:585.53px;top:213.00px;font-size:17.5px;color:#333333;font-weight:400;letter-spacing:0.000px;">E</span>
<span class="t" style="left:705.53px;top:213.00px;font-size:17.5px;color:#333333;font-weight:400;letter-spacing:0.000px;">F</span>
<span class="t" style="left:797.67px;top:213.00px;font-size:17.5px;color:#333333;font-weight:400;letter-spacing:0.000px;">G</span>
<span class="t" style="left:890.03px;top:213.00px;font-size:17.5px;color:#333333;font-weight:400;letter-spacing:0.000px;">H</span>
<span class="t" style="left:987.17px;top:213.00px;font-size:17.5px;color:#333333;font-weight:400;letter-spacing:0.000px;">I</span>
<span class="t" style="left:1079.47px;top:213.00px;font-size:17.5px;color:#333333;font-weight:400;letter-spacing:0.000px;">J</span>
<span class="t" style="left:1169.23px;top:213.00px;font-size:17.5px;color:#333333;font-weight:400;letter-spacing:0.000px;">K</span>
<span class="t" style="left:16.62px;top:242.60px;font-size:17.5px;color:#217346;font-weight:400;letter-spacing:0.000px;">1</span>
<span class="t" style="left:16.07px;top:271.60px;font-size:17.5px;color:#333333;font-weight:400;letter-spacing:0.000px;">2</span>
<span class="t" style="left:16.10px;top:300.60px;font-size:17.5px;color:#333333;font-weight:400;letter-spacing:0.000px;">3</span>
<span class="t" style="left:16.05px;top:329.60px;font-size:17.5px;color:#333333;font-weight:400;letter-spacing:0.000px;">4</span>
<span class="t" style="left:16.07px;top:358.60px;font-size:17.5px;color:#333333;font-weight:400;letter-spacing:0.000px;">5</span>
<span class="t" style="left:16.05px;top:387.60px;font-size:17.5px;color:#333333;font-weight:400;letter-spacing:0.000px;">6</span>
<span class="t" style="left:278.73px;top:271.60px;font-size:17.5px;color:#000000;font-weight:400;letter-spacing:0.156px;">sales</span>
<span class="t" style="left:278.37px;top:300.60px;font-size:17.5px;color:#000000;font-weight:400;letter-spacing:1.412px;">2020</span>
<span class="t" style="left:137.06px;top:329.60px;font-size:17.5px;color:#000000;font-weight:400;letter-spacing:0.949px;">bakery</span>
</div>
</body></html>
